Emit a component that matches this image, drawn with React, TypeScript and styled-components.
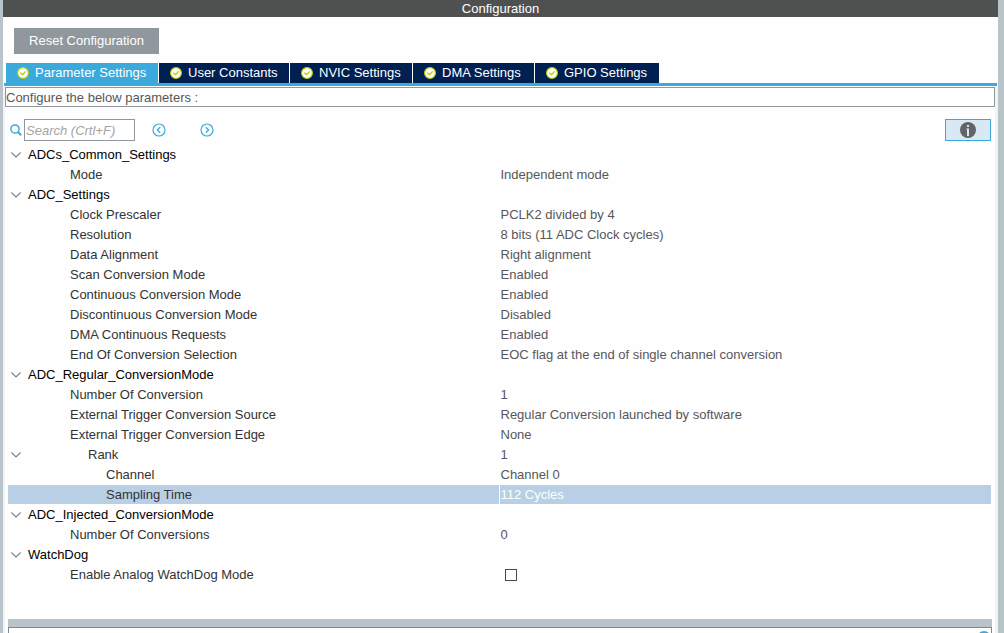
import React, { useState } from "react";
import styled, { createGlobalStyle } from "styled-components";

const GlobalStyle = createGlobalStyle`
  * { box-sizing: border-box; }
  body { margin: 0; background: #fefefe; }
  body, button, input {
    font-family: "Liberation Sans", Arial, sans-serif;
    font-size: 13px;
    line-height: 20px;
  }
`;

const Frame = styled.div`
  min-height: 100vh;
  display: flex;
  flex-direction: column;
  border-left: 3px solid #b9c4ca;
  border-right: 6px solid #b9c4ca;
`;

const TitleBar = styled.h1`
  margin: 0;
  height: 17px;
  font-size: 13px;
  font-weight: 400;
  line-height: 17px;
  text-align: center;
  color: #fff;
  background: #4f5150;
`;

const Toolbar = styled.div`
  padding: 11px 11px 9px;
  display: flex;
`;

const ResetButton = styled.button`
  width: 145px;
  height: 26px;
  padding: 0;
  border: 0;
  color: #fff;
  background: #90989e;
`;

const TabBar = styled.nav`
  display: flex;
  gap: 1px;
  margin: 0 1px;
  padding-left: 2px;
  border-bottom: 3px solid #3ca9dc;
`;

const Tab = styled.button<{ $active: boolean; $width: number }>`
  flex: 0 0 ${(p) => p.$width}px;
  height: 20px;
  padding: 0 0 0 11px;
  border: 0;
  display: flex;
  align-items: center;
  gap: 6px;
  white-space: nowrap;
  color: #fff;
  background: ${(p) => (p.$active ? "#3ca9dc" : "#002052")};
`;

const Body = styled.main`
  flex: 1;
  display: flex;
  flex-direction: column;
  padding-top: 1px;
  border-left: 2px solid #f1f3f4;
  border-right: 3px solid #f1f3f4;
`;

const Hint = styled.p`
  margin: 0 0 12px;
  height: 20px;
  line-height: 19px;
  border: 1px solid #90989e;
  color: #57575b;
`;

const SearchRow = styled.div`
  display: flex;
  align-items: center;
  height: 22px;
  margin: 0 4px 4px 5px;
`;

const SearchLabel = styled.label`
  display: flex;
  width: 14px;
`;

const SearchInput = styled.input`
  width: 111px;
  height: 22px;
  padding: 0 1px;
  border: 1px solid #90989e;
  font-style: italic;
  background: #fff;
  &::placeholder { color: #a4a4a4; }
`;

const RoundButton = styled.button`
  width: 14px;
  height: 14px;
  margin-left: 17px;
  padding: 0;
  border: 0;
  display: flex;
  background: none;
  & + & { margin-left: 34px; }
`;

const InfoButton = styled.button`
  width: 46px;
  height: 22px;
  margin-left: auto;
  padding: 0;
  display: flex;
  align-items: center;
  justify-content: center;
  border: 1px solid #3ca9dc;
  background: #d9e8f5;
`;

const Settings = styled.table`
  table-layout: fixed;
  width: auto;
  margin: 0 4px 34px 3px;
  border-collapse: separate;
  border-spacing: 0;
`;

const Row = styled.tr<{ $selected?: boolean }>`
  height: 20px;
  color: ${(p) => (p.$selected ? "#fff" : "#57575b")};
  td, th {
    background: ${(p) => (p.$selected ? "#b8cfe5" : "transparent")};
    background-clip: padding-box;
    border-bottom: 1px solid transparent;
  }
`;

const NameCell = styled.th<{ $indent: number; $group?: boolean }>`
  width: 50%;
  height: 20px;
  padding: 0 0 0 ${(p) => p.$indent}px;
  line-height: 19px;
  font-weight: 400;
  text-align: left;
  border-right: 1px solid #fefefe;
  color: ${(p) => (p.$group ? "#000" : "#333")};
`;

const ValueCell = styled.td`
  height: 20px;
  padding: 0 0 0 1px;
  line-height: 19px;
`;

const Toggle = styled.button<{ $gap: number }>`
  display: flex;
  align-items: center;
  gap: ${(p) => p.$gap}px;
  height: 19px;
  padding: 0;
  border: 0;
  line-height: 19px;
  color: inherit;
  background: none;
`;

const CheckBox = styled.input`
  appearance: none;
  display: block;
  width: 12px;
  height: 12px;
  margin: 0 0 0 4px;
  border: 1px solid #4a4a4e;
  background: #fff;
  &:checked { background: #3ca9dc; }
`;

const Splitter = styled.div`
  height: 8px;
  margin: 0 3px;
  background: #b9c4ca;
`;

const DetailPanel = styled.section`
  position: relative;
  flex: 1;
  margin: 0 3px;
  overflow: hidden;
  border: 1px solid #7a8a96;
  border-bottom: 0;
`;

const PanelButton = styled.button`
  position: absolute;
  top: 3px;
  right: 0;
  padding: 0;
  border: 0;
  display: flex;
  background: none;
`;

const CheckIcon = () => (
  <svg width="12" height="12" viewBox="0 0 12 12" aria-hidden="true">
    <circle cx="6" cy="6" r="5.4" fill="#fff" stroke="#bccf00" strokeWidth="1.2" />
    <path d="M3.2 5.6 5.4 7.8 8.8 4.4" fill="none" stroke="#bccf00" strokeWidth="1.3" />
  </svg>
);

const SearchIcon = () => (
  <svg width="12" height="12" viewBox="0 0 12 12" fill="none" stroke="#3ca9dc" aria-hidden="true">
    <circle cx="5" cy="5" r="4.1" strokeWidth="1.5" />
    <path d="M8 8 11.2 11.2" strokeWidth="2" />
  </svg>
);

const ArrowIcon = ({ d, ring = 1.2 }: { d: string; ring?: number }) => (
  <svg width="14" height="14" viewBox="0 0 14 14" fill="none" stroke="#3ca9dc" aria-hidden="true">
    <circle cx="7" cy="7" r="6" strokeWidth={ring} />
    <path d={d} strokeWidth="1.3" />
  </svg>
);

const InfoIcon = () => (
  <svg width="16" height="16" viewBox="0 0 16 16" aria-hidden="true">
    <circle cx="8" cy="8" r="8" fill="#636466" />
    <path d="M7 3h2v2H7zM6.5 6.5H9V14H7V7.5h-.5z" fill="#d9e8f5" />
  </svg>
);

const Chevron = () => (
  <svg width="10" height="6" viewBox="0 0 10 6" fill="none" stroke="#808080" aria-hidden="true">
    <path d="M.4.5 5 5 9.6.5" strokeWidth="1.1" />
  </svg>
);

const tabs = [
  { name: "Parameter Settings", width: 152 },
  { name: "User Constants", width: 130 },
  { name: "NVIC Settings", width: 122 },
  { name: "DMA Settings", width: 121 },
  { name: "GPIO Settings", width: 124 },
];

type Item = { name: string; value?: string; level?: number; kind?: "group" | "node" | "check" };

const items: Item[] = [
  { name: "ADCs_Common_Settings", kind: "group" },
  { name: "Mode", value: "Independent mode" },
  { name: "ADC_Settings", kind: "group" },
  { name: "Clock Prescaler", value: "PCLK2 divided by 4" },
  { name: "Resolution", value: "8 bits (11 ADC Clock cycles)" },
  { name: "Data Alignment", value: "Right alignment" },
  { name: "Scan Conversion Mode", value: "Enabled" },
  { name: "Continuous Conversion Mode", value: "Enabled" },
  { name: "Discontinuous Conversion Mode", value: "Disabled" },
  { name: "DMA Continuous Requests", value: "Enabled" },
  { name: "End Of Conversion Selection", value: "EOC flag at the end of single channel conversion" },
  { name: "ADC_Regular_ConversionMode", kind: "group" },
  { name: "Number Of Conversion", value: "1" },
  { name: "External Trigger Conversion Source", value: "Regular Conversion launched by software" },
  { name: "External Trigger Conversion Edge", value: "None" },
  { name: "Rank", value: "1", kind: "node" },
  { name: "Channel", value: "Channel 0", level: 2 },
  { name: "Sampling Time", value: "112 Cycles", level: 2 },
  { name: "ADC_Injected_ConversionMode", kind: "group" },
  { name: "Number Of Conversions", value: "0" },
  { name: "WatchDog", kind: "group" },
  { name: "Enable Analog WatchDog Mode", kind: "check" },
];

export default function App() {
  const [active, setActive] = useState("Parameter Settings");
  const [selected, setSelected] = useState("Sampling Time");

  return (
    <Frame>
      <GlobalStyle />
      <TitleBar>Configuration</TitleBar>
      <Toolbar>
        <ResetButton>Reset Configuration</ResetButton>
      </Toolbar>
      <TabBar>
        {tabs.map((t) => (
          <Tab key={t.name} $active={t.name === active} $width={t.width} onClick={() => setActive(t.name)}>
            <CheckIcon />
            {t.name}
          </Tab>
        ))}
      </TabBar>
      <Body>
        <Hint>Configure the below parameters :</Hint>
        <SearchRow>
          <SearchLabel htmlFor="search" aria-label="Search">
            <SearchIcon />
          </SearchLabel>
          <SearchInput id="search" placeholder="Search (Crtl+F)" />
          <RoundButton aria-label="Previous">
            <ArrowIcon d="M8.2 4.2 5.4 7l2.8 2.8" />
          </RoundButton>
          <RoundButton aria-label="Next">
            <ArrowIcon d="M5.8 4.2 8.6 7 5.8 9.8" />
          </RoundButton>
          <InfoButton aria-label="Information">
            <InfoIcon />
          </InfoButton>
        </SearchRow>
        <Settings>
          <tbody>
            {items.map((item) => {
              const group = item.kind === "group";
              const toggles = group || item.kind === "node";
              return (
                <Row key={item.name} $selected={item.name === selected} onClick={() => setSelected(item.name)}>
                  <NameCell scope="row" $group={group} $indent={toggles ? 3 : 62 + 18 * (item.level ?? 0)}>
                    {toggles ? (
                      <Toggle $gap={group ? 7 : 67}>
                        <Chevron />
                        {item.name}
                      </Toggle>
                    ) : item.kind === "check" ? (
                      <label htmlFor="watchdog">{item.name}</label>
                    ) : (
                      item.name
                    )}
                  </NameCell>
                  <ValueCell>
                    {item.kind === "check" ? <CheckBox id="watchdog" type="checkbox" /> : item.value}
                  </ValueCell>
                </Row>
              );
            })}
          </tbody>
        </Settings>
        <Splitter />
        <DetailPanel>
          <PanelButton aria-label="Show details">
            <ArrowIcon d="M4.2 5.8 7 8.6 9.8 5.8" ring={2} />
          </PanelButton>
        </DetailPanel>
      </Body>
    </Frame>
  );
}
